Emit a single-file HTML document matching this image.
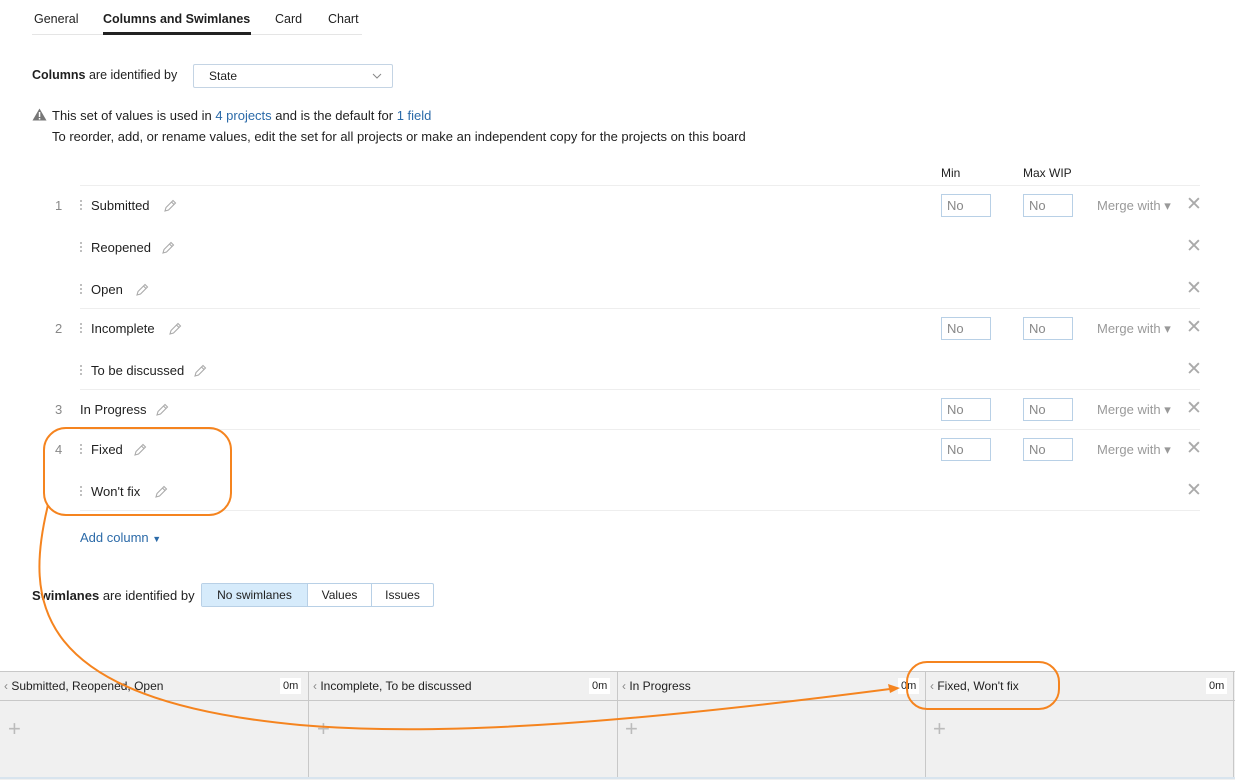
<!DOCTYPE html>
<html><head><style>
body{margin:0;width:1235px;height:779px;position:relative;background:#fff;font-family:"Liberation Sans",sans-serif;font-size:13px;color:#1f1f1f;overflow:hidden}
.a{position:absolute;white-space:nowrap}
.sep{position:absolute;left:80px;width:1120px;height:1px;background:#eeeeee}
.num{position:absolute;left:55px;color:#888}
.dots{position:absolute;left:80px;width:2px;height:12px;background:radial-gradient(circle,#aaa 0.9px,transparent 1px) 0 0/2px 4px}
.in{position:absolute;width:43px;height:21px;border:1px solid #b8d0e6;color:#888;line-height:21px;padding-left:5px;box-sizing:content-box}
.mw{position:absolute;left:1097px;color:#999}
.x{position:absolute;left:1186px;color:#aaa;font-size:19px;line-height:19px}
.pen{position:absolute;width:14px;height:14px}
.blue{color:#2b6aa8}
.om{position:absolute;top:678px;background:#fff;height:16px;line-height:16px;padding:0 3px;font-size:11px}
</style></head><body>
<div class="a" style="left:34px;top:12px;font-size:12.5px">General</div>
<div class="a" style="left:103px;top:12px;font-weight:bold;font-size:12.5px">Columns and Swimlanes</div>
<div class="a" style="left:275px;top:12px;font-size:12.5px">Card</div>
<div class="a" style="left:328px;top:12px;font-size:12.5px">Chart</div>
<div class="a" style="left:32px;top:34px;width:330px;height:1px;background:#e5e5e5"></div>
<div class="a" style="left:103px;top:32px;width:148px;height:3px;background:#222"></div>

<div class="a" style="left:32px;top:68px;font-size:12.5px"><b>Columns</b> are identified by</div>
<div class="a" style="left:193px;top:64px;width:198px;height:22px;border:1px solid #c4d4e4;border-radius:2px"></div>
<div class="a" style="left:209px;top:69px;font-size:12px">State</div>
<svg class="a" style="left:372px;top:73px" width="10" height="6"><path d="M1 1l4 4 4-4" stroke="#888" fill="none"/></svg>

<svg class="a" style="left:32px;top:108px" width="15" height="13"><path d="M7.5 0.5L14.5 12.5H0.5Z" fill="#777"/><rect x="6.8" y="4" width="1.5" height="5" fill="#fff"/><rect x="6.8" y="10" width="1.5" height="1.5" fill="#fff"/></svg>
<div class="a" style="left:52px;top:108px">This set of values is used in <span class="blue">4 projects</span> and is the default for <span class="blue">1 field</span></div>
<div class="a" style="left:52px;top:129px">To reorder, add, or rename values, edit the set for all projects or make an independent copy for the projects on this board</div>

<div class="a" style="left:941px;top:166px;font-size:12px">Min</div>
<div class="a" style="left:1023px;top:166px;font-size:12px">Max WIP</div>

<div class="sep" style="top:185px"></div>
<div class="sep" style="top:308px"></div>
<div class="sep" style="top:389px"></div>
<div class="sep" style="top:429px"></div>
<div class="sep" style="top:510px"></div>

<div class="num" style="top:198px">1</div><div class="dots" style="top:199px"></div><div class="a" style="left:91px;top:198px">Submitted</div>
<div class="dots" style="top:241px"></div><div class="a" style="left:91px;top:240px">Reopened</div>
<div class="dots" style="top:283px"></div><div class="a" style="left:91px;top:282px">Open</div>
<div class="num" style="top:321px">2</div><div class="dots" style="top:322px"></div><div class="a" style="left:91px;top:321px">Incomplete</div>
<div class="dots" style="top:364px"></div><div class="a" style="left:91px;top:363px">To be discussed</div>
<div class="num" style="top:402px">3</div><div class="a" style="left:80px;top:402px">In Progress</div>
<div class="num" style="top:442px">4</div><div class="dots" style="top:443px"></div><div class="a" style="left:91px;top:442px">Fixed</div>
<div class="dots" style="top:485px"></div><div class="a" style="left:91px;top:484px">Won't fix</div>

<svg width="0" height="0" style="position:absolute"><defs><g id="p"><path d="M2 12l1-3.5 7-7 2.5 2.5-7 7z M8.5 3l2.5 2.5" stroke="#aaa" fill="none" stroke-width="1.1"/></g></defs></svg>
<svg class="pen" style="left:163px;top:199px"><use href="#p"/></svg>
<svg class="pen" style="left:161px;top:241px"><use href="#p"/></svg>
<svg class="pen" style="left:135px;top:283px"><use href="#p"/></svg>
<svg class="pen" style="left:168px;top:322px"><use href="#p"/></svg>
<svg class="pen" style="left:193px;top:364px"><use href="#p"/></svg>
<svg class="pen" style="left:155px;top:403px"><use href="#p"/></svg>
<svg class="pen" style="left:133px;top:443px"><use href="#p"/></svg>
<svg class="pen" style="left:154px;top:485px"><use href="#p"/></svg>

<div class="in" style="left:941px;top:194px">No</div><div class="in" style="left:1023px;top:194px">No</div><div class="mw" style="top:198px">Merge with ▾</div>
<div class="in" style="left:941px;top:317px">No</div><div class="in" style="left:1023px;top:317px">No</div><div class="mw" style="top:321px">Merge with ▾</div>
<div class="in" style="left:941px;top:398px">No</div><div class="in" style="left:1023px;top:398px">No</div><div class="mw" style="top:402px">Merge with ▾</div>
<div class="in" style="left:941px;top:438px">No</div><div class="in" style="left:1023px;top:438px">No</div><div class="mw" style="top:442px">Merge with ▾</div>
<div class="x" style="top:195px">✕</div><div class="x" style="top:237px">✕</div><div class="x" style="top:279px">✕</div><div class="x" style="top:318px">✕</div><div class="x" style="top:360px">✕</div><div class="x" style="top:399px">✕</div><div class="x" style="top:439px">✕</div><div class="x" style="top:481px">✕</div>

<div class="a blue" style="left:80px;top:530px">Add column <span style="font-size:9px">▼</span></div>

<div class="a" style="left:32px;top:588px"><b>Swimlanes</b> are identified by</div>
<div class="a" style="left:201px;top:583px;width:231px;height:22px;border:1px solid #b8d0e6;border-radius:2px;font-size:12px;line-height:22px;display:flex">
<div style="width:105px;background:#d6ebfb;text-align:center;border-right:1px solid #b8d0e6">No swimlanes</div>
<div style="width:63px;text-align:center;border-right:1px solid #b8d0e6">Values</div>
<div style="flex:1;text-align:center">Issues</div></div>

<div class="a" style="left:0;top:671px;width:1235px;height:108px;background:#f0f0f0;border-top:1px solid #c8c8c8"></div>
<div class="a" style="left:0;top:700px;width:1235px;height:1px;background:#c8c8c8"></div>
<div class="a" style="left:0;top:777px;width:1235px;height:2px;background:#d8e4ee"></div>
<div class="a" style="left:308px;top:672px;width:1px;height:105px;background:#c8c8c8"></div>
<div class="a" style="left:617px;top:672px;width:1px;height:105px;background:#c8c8c8"></div>
<div class="a" style="left:925px;top:672px;width:1px;height:105px;background:#c8c8c8"></div>
<div class="a" style="left:1233px;top:672px;width:1px;height:105px;background:#c8c8c8"></div>
<div class="a" style="left:4px;top:679px;font-size:12px"><span style="color:#888">‹</span> Submitted, Reopened, Open</div>
<div class="a" style="left:313px;top:679px;font-size:12px"><span style="color:#888">‹</span> Incomplete, To be discussed</div>
<div class="a" style="left:622px;top:679px;font-size:12px"><span style="color:#888">‹</span> In Progress</div>
<div class="a" style="left:930px;top:679px;font-size:12px"><span style="color:#888">‹</span> Fixed, Won't fix</div>
<div class="om" style="left:280px">0m</div><div class="om" style="left:589px">0m</div><div class="om" style="left:898px">0m</div><div class="om" style="left:1206px">0m</div>
<div class="a" style="left:8px;top:718px;color:#bbb;font-size:22px;line-height:22px">+</div>
<div class="a" style="left:317px;top:718px;color:#bbb;font-size:22px;line-height:22px">+</div>
<div class="a" style="left:625px;top:718px;color:#bbb;font-size:22px;line-height:22px">+</div>
<div class="a" style="left:933px;top:718px;color:#bbb;font-size:22px;line-height:22px">+</div>

<svg class="a" style="left:0;top:0" width="1235" height="779">
<rect x="44" y="428" width="187" height="87" rx="22" fill="none" stroke="#f5841f" stroke-width="2"/>
<rect x="907" y="662" width="152" height="47" rx="20" fill="none" stroke="#f5841f" stroke-width="2"/>
<path d="M48 505 C25 600 30 700 300 725 C450 738 650 720 890 689" fill="none" stroke="#f5841f" stroke-width="2"/>
<path d="M900 688 L888 684 L890 693 Z" fill="#f5841f"/>
</svg>
</body></html>
